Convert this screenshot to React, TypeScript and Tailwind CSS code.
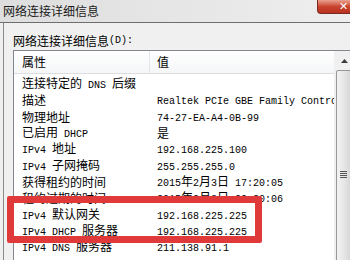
import React from 'react';

const rows: [string, string][] = [
  ['连接特定的 DNS 后缀', ''],
  ['描述', 'Realtek PCIe GBE Family Controller'],
  ['物理地址', '74-27-EA-A4-0B-99'],
  ['已启用 DHCP', '是'],
  ['IPv4 地址', '192.168.225.100'],
  ['IPv4 子网掩码', '255.255.255.0'],
  ['获得租约的时间', '2015年2月3日 17:20:05'],
  ['租约过期的时间', '2015年2月3日 22:20:06'],
  ['IPv4 默认网关', '192.168.225.225'],
  ['IPv4 DHCP 服务器', '192.168.225.225'],
  ['IPv4 DNS 服务器', '211.138.91.1'],
  ['', '211.138.91.2'],
];

// ASCII runs are narrow (6px mono), CJK runs are 12px
function Mixed({ text }: { text: string }) {
  const parts = text.match(/[\x00-\x7f]+|[^\x00-\x7f]+/g) || [];
  return (
    <>
      {parts.map((p, i) =>
        /^[\x00-\x7f]+$/.test(p) ? (
          <span key={i} className="text-[10px] leading-none whitespace-pre" style={{ fontFamily: '"Liberation Mono", monospace' }}>
            {p}
          </span>
        ) : (
          <span key={i} className="text-[12px] leading-none">
            {p}
          </span>
        )
      )}
    </>
  );
}

export default function App() {
  return (
    <div
      className="relative w-[350px] h-[260px] overflow-hidden bg-[#f0f0f0] text-black"
      style={{ fontFamily: '"Noto Sans CJK SC", sans-serif' }}
    >
      {/* Title bar */}
      <div className="relative h-[23px] bg-gradient-to-r from-[#dedede] via-[#e6e6e6] to-[#eeeeee] border-b border-[#6e6e6e]">
        <div className="pl-[3px] pt-[2px] text-[12px] leading-[18px] text-[#1a1a1a]">网络连接详细信息</div>
        <div className="absolute top-0 right-[-6px] w-[39px] h-[14px] rounded-bl-[4px] border border-t-0 border-[#7a2a20] bg-gradient-to-b from-[#e8a090] via-[#c9432f] to-[#b8321f] flex items-center justify-center pl-[14px]">
          <span className="text-white text-[11px] font-bold leading-none" style={{ fontFamily: '"DejaVu Sans", sans-serif' }}>✕</span>
        </div>
      </div>

      {/* Body */}
      <div className="ml-[3px] h-[237px] border-l border-[#8a8a8a] pl-[9px] pt-[11px]">
        <div className="h-[14px] flex items-center leading-none">
          <Mixed text="网络连接详细信息(D):" />
        </div>

        {/* List box */}
        <div className="mt-[2px] w-[342px] h-[220px] border border-[#828790] bg-white flex">
          <div className="flex-1 min-w-0 overflow-hidden">
            <div className="h-[23px] flex bg-gradient-to-b from-white to-[#f5f6f8] border-b border-[#dcdde0]">
              <div className="w-[136px] pl-[8px] flex items-center border-r border-[#e4e5e8] text-[12px]">属性</div>
              <div className="pl-[7px] flex items-center text-[12px]">值</div>
            </div>
            {rows.map(([k, v], i) => (
              <div key={i} className="h-[16.3px] flex items-center whitespace-nowrap leading-none">
                <div className="w-[143px] shrink-0 pl-[8px]">
                  <Mixed text={k} />
                </div>
                <div className="shrink-0">
                  <Mixed text={v} />
                </div>
              </div>
            ))}
          </div>

          {/* Scrollbar */}
          <div className="w-[20px] shrink-0 flex flex-col bg-[#f0f0f0]">
            <div className="h-[19px] flex items-center justify-center">
              <svg width="7" height="4" viewBox="0 0 7 4">
                <path d="M0 4 L3.5 0 L7 4 Z" fill="#3c3c3c" />
              </svg>
            </div>
            <div className="flex-1 ml-[2px] border border-[#979797] rounded-[2px] bg-gradient-to-r from-[#f3f3f3] via-[#e4e4e4] to-[#cfcfcf] flex items-start justify-center pt-[100px] pr-[3px]">
              <div className="flex flex-col gap-[1px]">
                <div className="w-[7px] h-[1px] bg-[#555]" />
                <div className="w-[7px] h-[1px] bg-[#555]" />
                <div className="w-[7px] h-[1px] bg-[#555]" />
                <div className="w-[7px] h-[1px] bg-[#555]" />
              </div>
            </div>
          </div>
        </div>
      </div>

      {/* Red highlight */}
      <div className="absolute left-[7px] top-[196px] w-[255px] h-[47px] border-[7px] border-[#e0393a] rounded-[2px]" />
    </div>
  );
}
